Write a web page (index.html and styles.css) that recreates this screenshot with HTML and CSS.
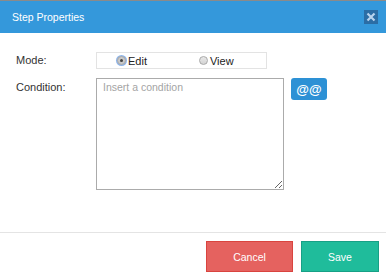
FILE: index.html
```html
<!DOCTYPE html>
<html lang="en">
<head>
    <meta charset="UTF-8">
    <title>Step Properties</title>
    <link rel="stylesheet" href="styles.css">
</head>
<body>
    <div class="dialog">
        <div class="dialog-header">
            <div class="dialog-title">Step Properties</div>
            <button class="close-btn">
                <svg width="10" height="10" viewBox="0 0 10 10">
                    <path d="M1.5 1.5 L8.5 8.5 M8.5 1.5 L1.5 8.5" stroke="#b9d4ee" stroke-width="2.2"/>
                </svg>
            </button>
        </div>

        <div class="dialog-body">
            <div class="form-row">
                <label class="form-label mode-label">Mode:</label>
                <div class="radio-group">
                    <label class="radio-option option-edit">
                        <span class="radio checked"><span class="dot"></span></span>Edit
                    </label>
                    <label class="radio-option option-view">
                        <span class="radio"></span>View
                    </label>
                </div>
            </div>
            <div class="form-row">
                <label class="form-label cond-label">Condition:</label>
                <textarea class="condition-input" placeholder="Insert a condition"></textarea>
                <button class="var-btn">@@</button>
            </div>
        </div>

        <div class="dialog-footer">
            <button class="btn btn-cancel">Cancel</button>
            <button class="btn btn-save">Save</button>
        </div>
    </div>
</body>
</html>
```

FILE: styles.css
```css
* {
    margin: 0;
    padding: 0;
    box-sizing: border-box;
    font-family: 'Liberation Sans', Arial, sans-serif;
}

body {
    background-color: #ffffff;
    width: 386px;
    height: 277px;
    overflow: hidden;
}

.dialog {
    display: flex;
    flex-direction: column;
    height: 277px;
}

.dialog-header {
    height: 33px;
    border-top: 1px solid #8a8a8a;
    background-color: #3498db;
    display: flex;
    align-items: center;
    justify-content: space-between;
    padding: 0 8px 1px 12px;
}

.dialog-title {
    color: #ffffff;
    font-size: 10.5px;
}

.close-btn {
    width: 14px;
    height: 14px;
    border: none;
    background-color: #2b6da5;
    display: flex;
    align-items: center;
    justify-content: center;
    cursor: pointer;
}

.dialog-body {
    height: 199px;
    padding: 19px 0 0 16px;
    display: flex;
    flex-direction: column;
    gap: 9px;
}

.form-row {
    display: flex;
    align-items: flex-start;
}

.form-label {
    width: 80px;
    font-size: 11px;
    color: #333333;
}

.mode-label {
    line-height: 17px;
}

.cond-label {
    padding-top: 3px;
}

.radio-group {
    width: 171px;
    height: 17px;
    border: 1px solid #e3e3e3;
    display: flex;
    align-items: center;
    font-size: 11px;
    color: #222222;
}

.radio-option {
    display: flex;
    align-items: center;
    gap: 2px;
}

.option-edit {
    margin-left: 20px;
}

.option-view {
    margin-left: 52px;
}

.radio {
    width: 9px;
    height: 9px;
    border-radius: 50%;
    border: 1px solid #a9a9a9;
    background: linear-gradient(#e8e8e8, #d4d4d4);
    display: flex;
    align-items: center;
    justify-content: center;
}

.radio.checked {
    box-shadow: 0 0 0 1px #8db4ea;
    background: #c9c9c9;
}

.radio .dot {
    width: 3px;
    height: 3px;
    border-radius: 50%;
    background-color: #444444;
}

.condition-input {
    width: 188px;
    height: 112px;
    border: 1px solid #ababab;
    padding: 2px 6px;
    font-size: 10.5px;
    color: #333333;
    resize: both;
}

.condition-input::placeholder {
    color: #a4a4a4;
}

.var-btn {
    margin-left: 7px;
    width: 36px;
    height: 22px;
    border: none;
    border-radius: 3px;
    background-color: #2d91d5;
    color: #ffffff;
    font-size: 13px;
    font-weight: 700;
    cursor: pointer;
}

.dialog-footer {
    border-top: 1px solid #e4e4e4;
    display: flex;
    justify-content: flex-end;
    gap: 8px;
    padding: 8px 7px 0 0;
}

.btn {
    height: 31px;
    padding: 0 26px;
    font-size: 10.5px;
    color: #ffffff;
    cursor: pointer;
}

.btn-cancel {
    width: 87px;
    background-color: #e5625f;
    border: 1px solid #d9443f;
}

.btn-save {
    width: 78px;
    background-color: #1fbc9b;
    border: 1px solid #17a086;
}
```
